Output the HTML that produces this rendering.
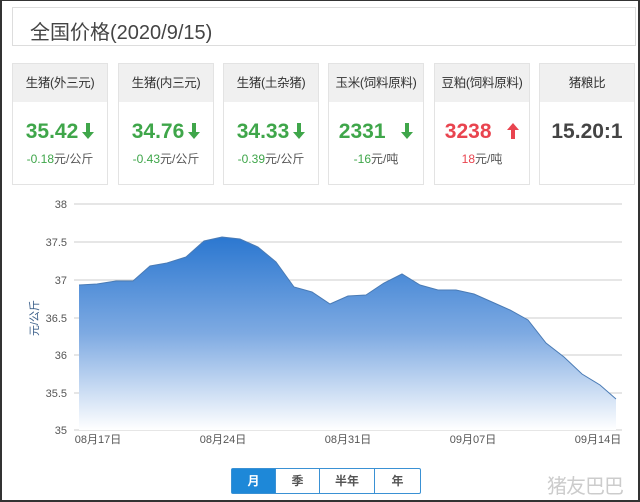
<!DOCTYPE html>
<html><head><meta charset="utf-8"><style>
*{margin:0;padding:0;box-sizing:border-box}
body{width:640px;height:502px;overflow:hidden;background:#fff;font-family:"Liberation Sans","Noto Sans CJK SC",sans-serif;position:relative}
.frame{position:absolute;inset:0;border:2px solid #333;border-top-width:1px}
.title{position:absolute;left:12px;top:7px;width:624px;height:39px;border:1px solid #ddd;font-size:20px;color:#444;padding:8px 0 0 17px}
.card{position:absolute;top:63px;width:96px;height:122px;border:1px solid #e3e3e3;text-align:center}
.card .h{height:38px;background:#f0f0f0;font-size:12.5px;color:#333;line-height:38px;letter-spacing:-0.3px}
.card .v{font-size:21px;font-weight:bold;margin-top:18px}
.card .v svg{vertical-align:-1px;margin-left:4px}
.card .s{font-size:12px;margin-top:6px;color:#555}
.g{color:#3fa64a}.r{color:#e9444f}.k{color:#444}
.btns{position:absolute;left:231px;top:468px;height:26px;display:flex;border:1px solid #3a91d4;border-radius:2px}
.btns div{font-size:12px;font-weight:bold;color:#555;text-align:center;line-height:24px;border-left:1px solid #3a91d4}
.btns div:first-child{border:none;background:#1e88d8;color:#fff}
.wm{position:absolute;left:547px;top:470px;font-size:20px;color:#ccc;letter-spacing:-1px}
</style></head><body>
<div class="title">全国价格(2020/9/15)</div>
<div class="card" style="left:12px"><div class="h">生猪(外三元)</div><div class="v g">35.42<svg width="12" height="16" viewBox="0 0 12 16"><path d="M4 0h4v9h4l-6 7-6-7h4z" fill="#3fa64a"/></svg></div><div class="s"><span class="g">-0.18</span>元/公斤</div></div>
<div class="card" style="left:118px"><div class="h">生猪(内三元)</div><div class="v g">34.76<svg width="12" height="16" viewBox="0 0 12 16"><path d="M4 0h4v9h4l-6 7-6-7h4z" fill="#3fa64a"/></svg></div><div class="s"><span class="g">-0.43</span>元/公斤</div></div>
<div class="card" style="left:223px"><div class="h">生猪(土杂猪)</div><div class="v g">34.33<svg width="12" height="16" viewBox="0 0 12 16"><path d="M4 0h4v9h4l-6 7-6-7h4z" fill="#3fa64a"/></svg></div><div class="s"><span class="g">-0.39</span>元/公斤</div></div>
<div class="card" style="left:328px"><div class="h">玉米(饲料原料)</div><div class="v g">2331 &nbsp;<svg width="12" height="16" viewBox="0 0 12 16"><path d="M4 0h4v9h4l-6 7-6-7h4z" fill="#3fa64a"/></svg></div><div class="s"><span class="g">-16</span>元/吨</div></div>
<div class="card" style="left:434px"><div class="h">豆粕(饲料原料)</div><div class="v r">3238 &nbsp;<svg width="12" height="16" viewBox="0 0 12 16"><path d="M4 16h4V7h4L6 0 0 7h4z" fill="#e9444f"/></svg></div><div class="s"><span class="r">18</span>元/吨</div></div>
<div class="card" style="left:539px"><div class="h">猪粮比</div><div class="v k">15.20:1</div></div>
<svg style="position:absolute;left:0;top:190px" width="640" height="270" viewBox="0 190 640 270">
<defs><linearGradient id="a" x1="0" y1="0" x2="0" y2="1"><stop offset="0" stop-color="#2b77d0"/><stop offset="0.5" stop-color="#7eaae2"/><stop offset="1" stop-color="#fff"/></linearGradient></defs>
<g stroke="#ccc" stroke-width="1">
<line x1="74" y1="204" x2="622" y2="204"/><line x1="74" y1="242" x2="622" y2="242"/><line x1="74" y1="280" x2="622" y2="280"/><line x1="74" y1="318" x2="622" y2="318"/><line x1="74" y1="355" x2="622" y2="355"/><line x1="74" y1="393" x2="622" y2="393"/><line x1="74" y1="430" x2="622" y2="430"/></g>
<path d="M79,285 L97,284 L116,281 L133,281 L150,266 L167,263 L186,257 L204,241 L222,237 L240,239 L258,247 L276,262 L294,287 L312,292 L330,304 L348,296 L366,295 L384,283 L402,274 L420,285 L438,290 L456,290 L474,294 L492,302 L510,310 L528,320 L546,343 L564,357 L582,374 L600,385 L616,399 L616,430 L79,430Z" fill="url(#a)"/>
<path d="M79,285 L97,284 L116,281 L133,281 L150,266 L167,263 L186,257 L204,241 L222,237 L240,239 L258,247 L276,262 L294,287 L312,292 L330,304 L348,296 L366,295 L384,283 L402,274 L420,285 L438,290 L456,290 L474,294 L492,302 L510,310 L528,320 L546,343 L564,357 L582,374 L600,385 L616,399" fill="none" stroke="#4a7bb5" stroke-width="1"/>
<g font-size="11" fill="#555" text-anchor="end" font-family="Liberation Sans,sans-serif">
<text x="67" y="208">38</text><text x="67" y="246">37.5</text><text x="67" y="284">37</text><text x="67" y="322">36.5</text><text x="67" y="359">36</text><text x="67" y="397">35.5</text><text x="67" y="434">35</text></g>
<text transform="translate(38,318) rotate(-90)" font-size="11" fill="#3b5f8a" text-anchor="middle">元/公斤</text>
<g font-size="11" fill="#555" text-anchor="middle"><text x="98" y="443">08月17日</text><text x="223" y="443">08月24日</text><text x="348" y="443">08月31日</text><text x="473" y="443">09月07日</text><text x="598" y="443">09月14日</text></g>
</svg>
<div class="btns"><div style="width:43px">月</div><div style="width:44px">季</div><div style="width:55px">半年</div><div style="width:46px">年</div></div>
<div class="wm">猪友巴巴</div>
<div class="frame"></div>
</body></html>
